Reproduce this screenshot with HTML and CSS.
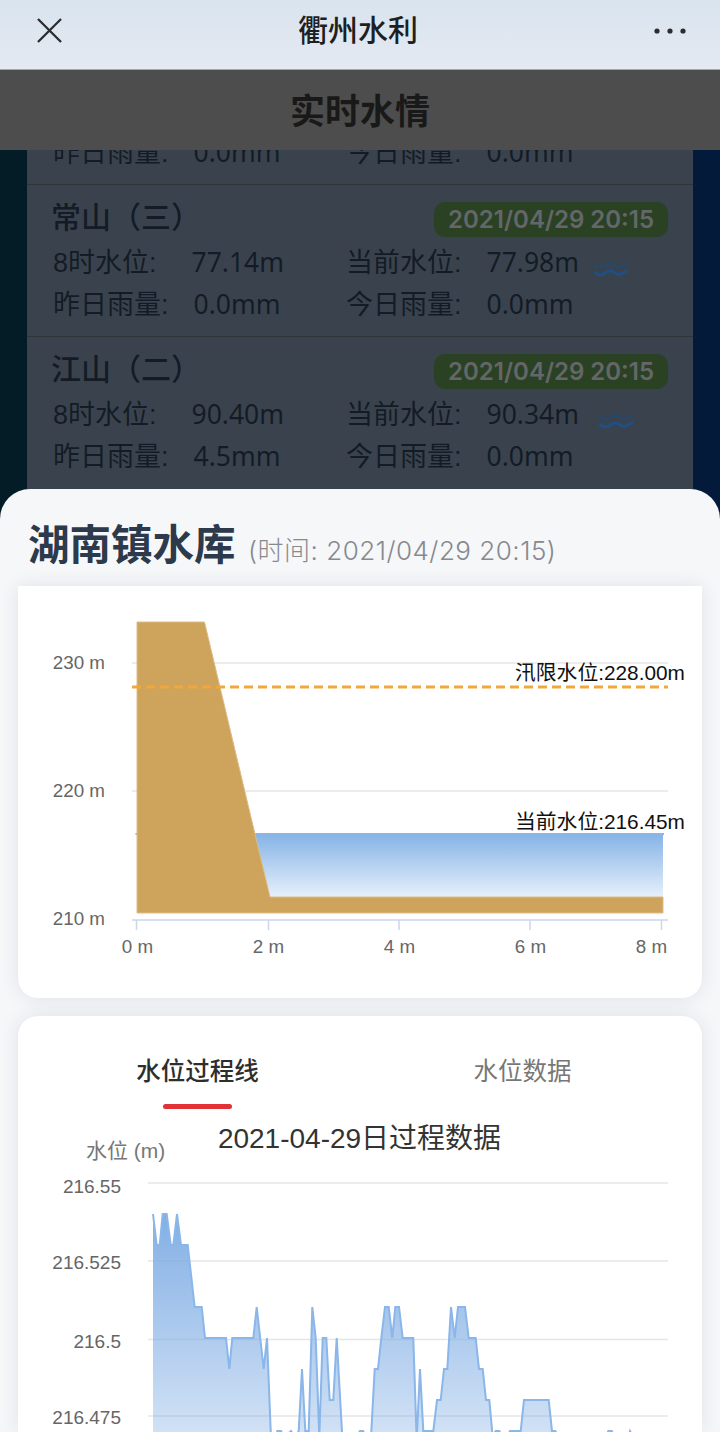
FILE: index.html
```html
<!DOCTYPE html>
<html lang="zh-CN">
<head>
<meta charset="utf-8">
<title>衢州水利</title>
<link rel="stylesheet" href="styles.css">
</head>
<body>
<div class="screen">
    <header class="nav">
        <svg class="nav-close" viewBox="0 0 26 26"><path d="M1 1 L25 25 M25 1 L1 25"/></svg>
        <div class="nav-title">衢州水利</div>
        <svg class="nav-more" viewBox="0 0 32 6"><circle cx="3" cy="3" r="2.6"/><circle cx="16" cy="3" r="2.6"/><circle cx="29" cy="3" r="2.6"/></svg>
    </header>
    <div class="subhead">实时水情</div>

    <div class="list">
        <div class="card card-tail">
            <div class="stats">
                <div><span class="label">昨日雨量:</span><span class="value">0.0mm</span></div>
                <div><span class="label">今日雨量:</span><span class="value">0.0mm</span></div>
            </div>
        </div>
        <div class="card">
            <div class="card-head">
                <div class="card-title">常山（三）</div>
                <div class="badge">2021/04/29 20:15</div>
            </div>
            <div class="stats">
                <div><span class="label label-short">8时水位:</span><span class="value">77.14m</span></div>
                <div><span class="label">当前水位:</span><span class="value">77.98m</span>
                    <svg class="wave" viewBox="0 0 36 16"><path class="wave-top" d="M1 3 C4 6 6 7 9.500 6 S14 2 18 2.500 S23 7 26.500 6 S32 3 35 2"/><path class="wave-bottom" d="M1 10.500 C4 13.500 6 14.500 9.500 13.500 S14 9.500 18 10 S23 14.500 26.500 13.500 S32 10.500 35 9.500"/></svg>
                </div>
                <div><span class="label">昨日雨量:</span><span class="value">0.0mm</span></div>
                <div><span class="label">今日雨量:</span><span class="value">0.0mm</span></div>
            </div>
        </div>
        <div class="card card-last">
            <div class="card-head">
                <div class="card-title">江山（二）</div>
                <div class="badge">2021/04/29 20:15</div>
            </div>
            <div class="stats">
                <div><span class="label label-short">8时水位:</span><span class="value">90.40m</span></div>
                <div><span class="label">当前水位:</span><span class="value">90.34m</span>
                    <svg class="wave wave-far" viewBox="0 0 36 16"><path class="wave-top" d="M1 3 C4 6 6 7 9.500 6 S14 2 18 2.500 S23 7 26.500 6 S32 3 35 2"/><path class="wave-bottom" d="M1 10.500 C4 13.500 6 14.500 9.500 13.500 S14 9.500 18 10 S23 14.500 26.500 13.500 S32 10.500 35 9.500"/></svg>
                </div>
                <div><span class="label">昨日雨量:</span><span class="value">4.5mm</span></div>
                <div><span class="label">今日雨量:</span><span class="value">0.0mm</span></div>
            </div>
        </div>
    </div>

    <section class="sheet">
        <div class="sheet-head">
            <span class="sheet-title">湖南镇水库</span>
            <span class="sheet-time">(时间: 2021/04/29 20:15)</span>
        </div>

        <div class="panel panel-dam">
            <svg class="chart" width="684" height="412" viewBox="18 586 684 412">
                <defs>
                    <linearGradient id="waterFill" x1="0" y1="0" x2="0" y2="1">
                        <stop offset="0" stop-color="#84b2e6"/>
                        <stop offset="1" stop-color="#e8f1fb"/>
                    </linearGradient>
                </defs>
                <path class="grid" d="M132 663 H668 M132 791 H668"/>
                <rect x="137" y="833" width="526" height="65" fill="url(#waterFill)"/>
                <path class="water-edge" d="M135.500 834 H664"/>
                <polygon class="dam" points="137,622 204.500,622 270,897 663,897 663,913 137,913"/>
                <path class="limit" d="M132 687 H668"/>
                <path class="axis" d="M132 920 H668 M136.500 920 V930 M268.500 920 V930 M399 920 V930 M530 920 V930 M661.500 920 V930"/>
                <g class="tick-y">
                    <text x="105" y="669">230 m</text>
                    <text x="105" y="797">220 m</text>
                    <text x="105" y="925">210 m</text>
                </g>
                <g class="tick-x">
                    <text x="137.500" y="953">0 m</text>
                    <text x="268.500" y="953">2 m</text>
                    <text x="399.500" y="953">4 m</text>
                    <text x="530.500" y="953">6 m</text>
                    <text x="651.500" y="953">8 m</text>
                </g>
                <text class="mark" x="515" y="680">汛限水位:228.00m</text>
                <text class="mark" x="515" y="829">当前水位:216.45m</text>
            </svg>
        </div>

        <div class="panel panel-trend">
            <div class="tabs">
                <div class="tab tab-on">水位过程线</div>
                <div class="tab">水位数据</div>
            </div>
            <svg class="chart" width="684" height="312" viewBox="18 1120 684 312">
                <defs>
                    <linearGradient id="trendFill" gradientUnits="userSpaceOnUse" x1="0" y1="1214" x2="0" y2="1560">
                        <stop offset="0" stop-color="#7cabe3" stop-opacity="0.95"/>
                        <stop offset="1" stop-color="#7cabe3" stop-opacity="0"/>
                    </linearGradient>
                </defs>
                <text class="trend-title" x="359.500" y="1148">2021-04-29日过程数据</text>
                <text class="trend-unit" x="86" y="1158">水位 (m)</text>
                <path class="grid" d="M148 1183 H668 M148 1261 H668 M148 1339.500 H668 M148 1416 H668"/>
                <g class="tick-y trend-ticks">
                    <text x="121" y="1193">216.55</text>
                    <text x="121" y="1269">216.525</text>
                    <text x="121" y="1348">216.5</text>
                    <text x="121" y="1424">216.475</text>
                </g>
                <polygon fill="url(#trendFill)" points="153,1460 153,1214 156.700,1245 159.700,1245 162.700,1214 166.700,1214 170.700,1245 173.300,1245 177,1214 181,1245 187.700,1245 194.700,1307 201.700,1307 205,1338 226,1338 229.300,1369 232.300,1338 253.300,1338 256.700,1307 263.700,1369 267,1338 270.700,1431 274,1445 277.300,1431 281,1431 284.300,1437 291,1431 294.700,1437 298.700,1431 302,1369 305.300,1431 308.700,1431 312.300,1307 315.700,1338 319.300,1437 322.700,1338 326.300,1338 329.700,1400 333.300,1400 336.700,1338 342.300,1437 356,1437 360,1431 363,1431 367,1437 371,1437 374.700,1369 378,1369 381.300,1338 385,1307 388.700,1307 392.300,1338 395.300,1307 399,1307 402.700,1338 413.300,1338 416.700,1440 420,1369 423.300,1431 433.300,1431 437,1400 440.700,1400 444,1369 447.300,1369 451,1307 454.700,1338 458,1307 465,1307 468.700,1338 475.700,1338 479,1369 482.700,1369 486,1400 489.300,1400 492.700,1437 495.700,1431 499.300,1431 502.700,1437 506.700,1437 510,1431 520.700,1431 524,1400 548.700,1400 552,1431 555.300,1431 558.700,1437 606,1437 608.300,1431 611.700,1431 615,1437 628.300,1437 630,1431 633.300,1437 668,1437 668,1460"/>
                <polyline class="trend-line" points="153,1214 156.700,1245 159.700,1245 162.700,1214 166.700,1214 170.700,1245 173.300,1245 177,1214 181,1245 187.700,1245 194.700,1307 201.700,1307 205,1338 226,1338 229.300,1369 232.300,1338 253.300,1338 256.700,1307 263.700,1369 267,1338 270.700,1431 274,1445 277.300,1431 281,1431 284.300,1437 291,1431 294.700,1437 298.700,1431 302,1369 305.300,1431 308.700,1431 312.300,1307 315.700,1338 319.300,1437 322.700,1338 326.300,1338 329.700,1400 333.300,1400 336.700,1338 342.300,1437 356,1437 360,1431 363,1431 367,1437 371,1437 374.700,1369 378,1369 381.300,1338 385,1307 388.700,1307 392.300,1338 395.300,1307 399,1307 402.700,1338 413.300,1338 416.700,1440 420,1369 423.300,1431 433.300,1431 437,1400 440.700,1400 444,1369 447.300,1369 451,1307 454.700,1338 458,1307 465,1307 468.700,1338 475.700,1338 479,1369 482.700,1369 486,1400 489.300,1400 492.700,1437 495.700,1431 499.300,1431 502.700,1437 506.700,1437 510,1431 520.700,1431 524,1400 548.700,1400 552,1431 555.300,1431 558.700,1437 606,1437 608.300,1431 611.700,1431 615,1437 628.300,1437 630,1431 633.300,1437 668,1437"/>
            </svg>
        </div>
    </section>
</div>
</body>
</html>
```

FILE: styles.css
```css
html, body {
    margin: 0;
    padding: 0;
}

body {
    font-family: "Liberation Sans", "Noto Sans CJK SC", sans-serif;
}

.screen {
    position: relative;
    width: 720px;
    height: 1432px;
    overflow: hidden;
    display: flex;
    flex-direction: column;
    background: linear-gradient(90deg, #031c26 0%, #04203c 50%, #031a3b 100%);
}

/* top bars */
.nav {
    height: 70px;
    flex: none;
    display: flex;
    align-items: center;
    justify-content: space-between;
    padding: 0 34px 8px 37px;
    box-sizing: border-box;
    background: linear-gradient(180deg, #d9e4ee 0%, #e4e9f2 100%);
    border-bottom: 1px solid #a4a6a9;
}

.nav-close {
    width: 25px;
    height: 25px;
}

.nav-close path {
    fill: none;
    stroke: #2b2d30;
    stroke-width: 2.4;
}

.nav-title {
    font-size: 30px;
    font-weight: 500;
    color: #1d1f22;
    line-height: 40px;
}

.nav-more {
    width: 32px;
    height: 6px;
}

.nav-more circle {
    fill: #2b2d30;
}

.subhead {
    height: 80px;
    flex: none;
    box-sizing: border-box;
    padding-bottom: 4px;
    display: flex;
    align-items: center;
    justify-content: center;
    background: #4d4d4d;
    font-size: 35px;
    font-weight: 700;
    color: #191919;
    position: relative;
    z-index: 2;
}

/* water level list behind the sheet */
.list {
    flex: 1;
    overflow: hidden;
    padding: 0 27px;
}

.card {
    background: #3a434d;
    border-bottom: 1px solid #2f3439;
    padding: 17px 26px 10px;
    height: 151.500px;
    box-sizing: border-box;
    color: #131c26;
}

.card-tail {
    height: 35px;
    padding: 0 26px;
    overflow: hidden;
}

.card-tail .stats {
    margin-top: -19px;
}

.card-last {
    height: 200px;
}

.card-head {
    display: flex;
    align-items: center;
    justify-content: space-between;
    height: 35px;
}

.card-title {
    font-size: 30px;
    font-weight: 500;
    line-height: 35px;
    margin: -4px 0 0 -2px;
}

.badge {
    height: 35px;
    line-height: 35px;
    padding: 0 14px;
    margin-right: -1px;
    background: #2b4124;
    border-radius: 11px;
    font-family: Inter, sans-serif;
    font-size: 24px;
    font-weight: 600;
    color: #646769;
}

.stats {
    display: grid;
    grid-template-columns: 293px 1fr;
    grid-auto-rows: 42px;
    margin-top: 4px;
    font-size: 27px;
    line-height: 42px;
}

.stats > div {
    white-space: nowrap;
}

.label {
    display: inline-block;
    margin-right: 25px;
}

.label-short {
    margin-right: 35px;
}

.value {
    font-family: "Noto Sans", sans-serif;
    font-size: 26.500px;
}

.wave {
    width: 36px;
    height: 16px;
    margin-left: 6px;
    vertical-align: -5px;
    fill: none;
    stroke-width: 2.800;
}

.wave-far {
    margin-left: 11px;
}

.wave-top {
    stroke: #2a4766;
}

.wave-bottom {
    stroke: #1d5089;
}

/* bottom sheet */
.sheet {
    position: absolute;
    left: 0;
    right: 0;
    top: 489px;
    bottom: 0;
    overflow: hidden;
    background: #f6f7f9;
    border-radius: 30px 30px 0 0;
}

.sheet-head {
    height: 97px;
    box-sizing: border-box;
    padding: 28px 0 0 28px;
    white-space: nowrap;
}

.sheet-title {
    font-size: 41.500px;
    font-weight: 700;
    color: #2c3a4b;
    line-height: 58px;
}

.sheet-time {
    font-family: Inter, "Noto Sans CJK SC", sans-serif;
    font-size: 26px;
    font-weight: 300;
    letter-spacing: 0.500px;
    color: #86898e;
    margin-left: 8px;
}

.panel {
    margin: 0 18px 18px;
    background: #fff;
    box-shadow: 0 0 20px rgba(30, 40, 70, 0.1);
    overflow: hidden;
}

.panel-dam {
    height: 412px;
    border-radius: 0 0 20px 20px;
}

.panel-trend {
    border-radius: 20px 20px 0 0;
}

.chart {
    display: block;
}

.grid {
    fill: none;
    stroke: #e6e6e6;
    stroke-width: 1.500;
}

.dam {
    fill: #cea35c;
    stroke: #dcbd86;
    stroke-width: 1;
}

.water-edge {
    fill: none;
    stroke: #8ab6ea;
    stroke-width: 2;
}

.limit {
    fill: none;
    stroke: #f0a83d;
    stroke-width: 3.200;
    stroke-dasharray: 9 5;
}

.axis {
    fill: none;
    stroke: #ccd6eb;
    stroke-width: 1.500;
}

.tick-y text {
    text-anchor: end;
    font-size: 18.800px;
    fill: #666;
}

.tick-x text {
    font-size: 18.800px;
    fill: #666;
    text-anchor: middle;
}

.mark {
    font-size: 20.800px;
    fill: #111;
}

/* tabs and process chart */
.tabs {
    display: grid;
    grid-template-columns: 325px 325px;
    padding: 0 17px;
    height: 104px;
    box-sizing: border-box;
}

.tab {
    text-align: center;
    font-size: 24.500px;
    line-height: 34px;
    padding-top: 39px;
    color: #777;
    position: relative;
}

.tab-on {
    color: #2e2e2e;
    font-weight: 500;
}

.tab-on::after {
    content: "";
    position: absolute;
    left: 128px;
    top: 88px;
    width: 69px;
    height: 5px;
    border-radius: 3px;
    background: #e03237;
}

.trend-title {
    font-size: 28px;
    fill: #333;
    text-anchor: middle;
}

.trend-unit {
    font-size: 21px;
    fill: #777;
}

.trend-ticks text {
    font-size: 19px;
}

.trend-line {
    fill: none;
    stroke: #8ab6ea;
    stroke-width: 2;
}
```
